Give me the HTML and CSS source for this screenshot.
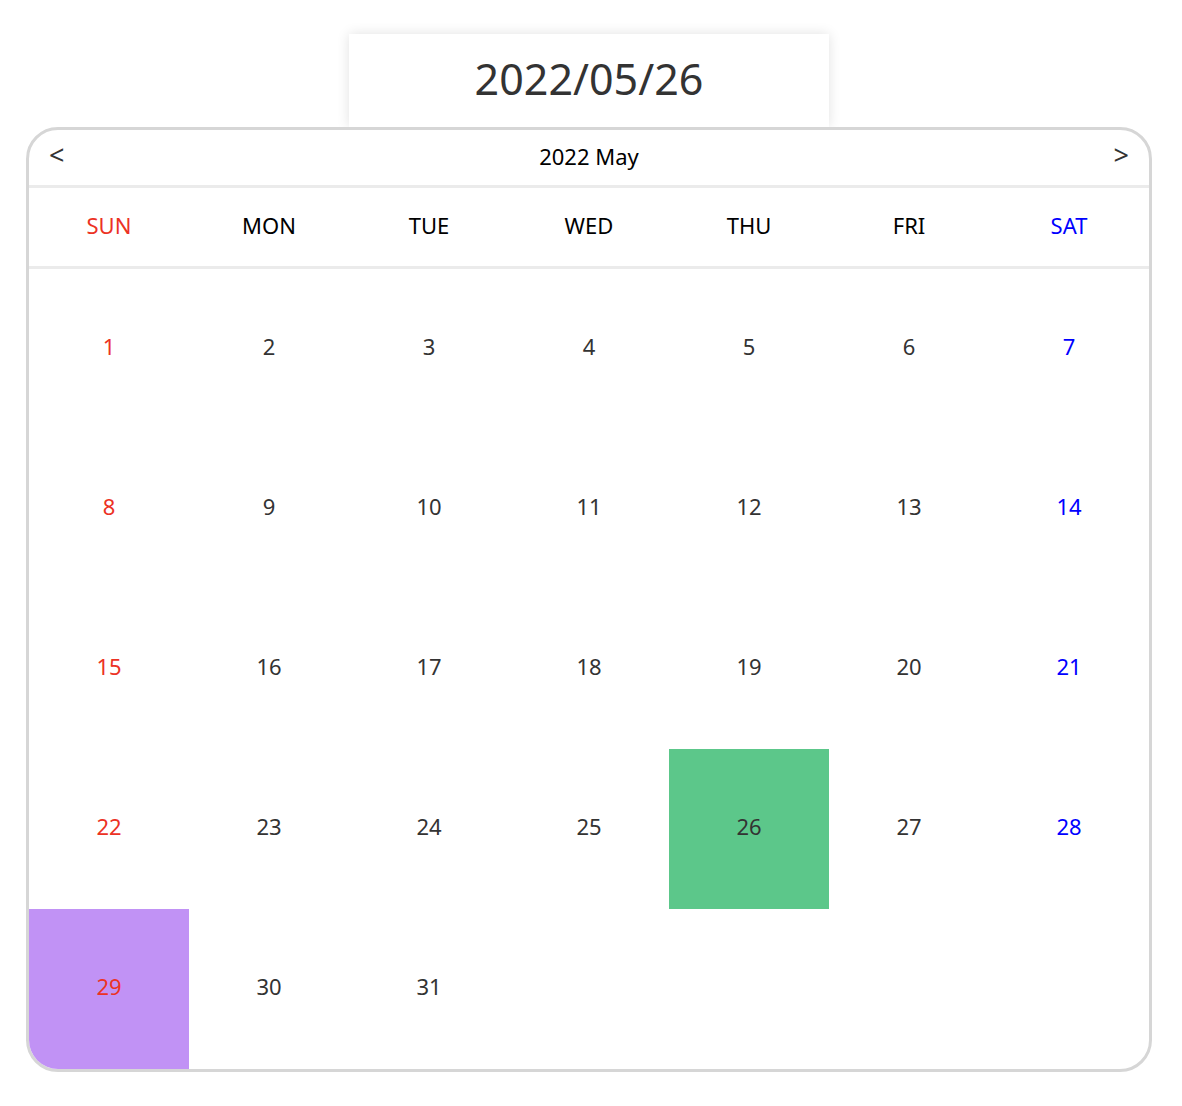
FILE: index.html
```html
<!DOCTYPE html>
<html lang="en">
<head>
<meta charset="utf-8">
<title>Calendar</title>
<link rel="stylesheet" href="styles.css">
</head>
<body>
<div class="wrap">
  <div class="display">2022/05/26</div>
  <div class="calendar">
    <div class="cal-head">
      <span class="nav">&lt;</span>
      <span class="title">2022 May</span>
      <span class="nav">&gt;</span>
    </div>
    <div class="weekdays">
      <div class="wd sun">SUN</div>
      <div class="wd">MON</div>
      <div class="wd">TUE</div>
      <div class="wd">WED</div>
      <div class="wd">THU</div>
      <div class="wd">FRI</div>
      <div class="wd sat">SAT</div>
    </div>
    <div class="days">
      <div class="day sun">1</div><div class="day">2</div><div class="day">3</div><div class="day">4</div><div class="day">5</div><div class="day">6</div><div class="day sat">7</div>
      <div class="day sun">8</div><div class="day">9</div><div class="day">10</div><div class="day">11</div><div class="day">12</div><div class="day">13</div><div class="day sat">14</div>
      <div class="day sun">15</div><div class="day">16</div><div class="day">17</div><div class="day">18</div><div class="day">19</div><div class="day">20</div><div class="day sat">21</div>
      <div class="day sun">22</div><div class="day">23</div><div class="day">24</div><div class="day">25</div><div class="day selected">26</div><div class="day">27</div><div class="day sat">28</div>
      <div class="day sun today">29</div><div class="day">30</div><div class="day">31</div><div class="day"></div><div class="day"></div><div class="day"></div><div class="day"></div>
    </div>
  </div>
</div>
</body>
</html>
```

FILE: styles.css
```css
* { box-sizing: border-box; }
html, body { margin: 0; padding: 0; background: #fff; }
body { font-family: "Noto Sans", "Open Sans", sans-serif; }

.wrap {
  width: 1126px;
  margin-left: 26px;
  padding-top: 34px;
}

.display {
  width: 480px;
  height: 93px;
  margin: 0 auto;
  background: #fff;
  box-shadow: 0 0 12px rgba(0, 0, 0, 0.12);
  text-align: center;
  line-height: 90px;
  font-size: 43px;
  color: #333;
}

.calendar {
  position: relative;
  background: #fff;
  border: 3px solid #d6d6d6;
  border-radius: 32px;
  overflow: hidden;
}

.cal-head {
  height: 58px;
  border-bottom: 3px solid #ebebeb;
  display: flex;
  align-items: center;
  justify-content: space-between;
  padding: 0 20px 2px 20px;
}
.nav { font-size: 27px; color: #333; line-height: 1; padding-bottom: 4px; }
.title { font-size: 22px; color: #000; padding-bottom: 2px; }

.weekdays {
  display: grid;
  grid-template-columns: repeat(7, 160px);
  height: 81px;
  border-bottom: 3px solid #ebebeb;
}
.wd {
  display: flex;
  align-items: center;
  justify-content: center;
  font-size: 22px;
  color: #000;
  padding-bottom: 4px;
}

.days {
  display: grid;
  grid-template-columns: repeat(7, 160px);
  grid-auto-rows: 160px;
}
.day {
  display: flex;
  align-items: center;
  justify-content: center;
  font-size: 22px;
  color: #333;
  padding-bottom: 6px;
}
.sun { color: #ec3224; }
.sat { color: #0000ff; }
.selected { background: #5cc78a; }
.today { background: #c192f5; }
```
